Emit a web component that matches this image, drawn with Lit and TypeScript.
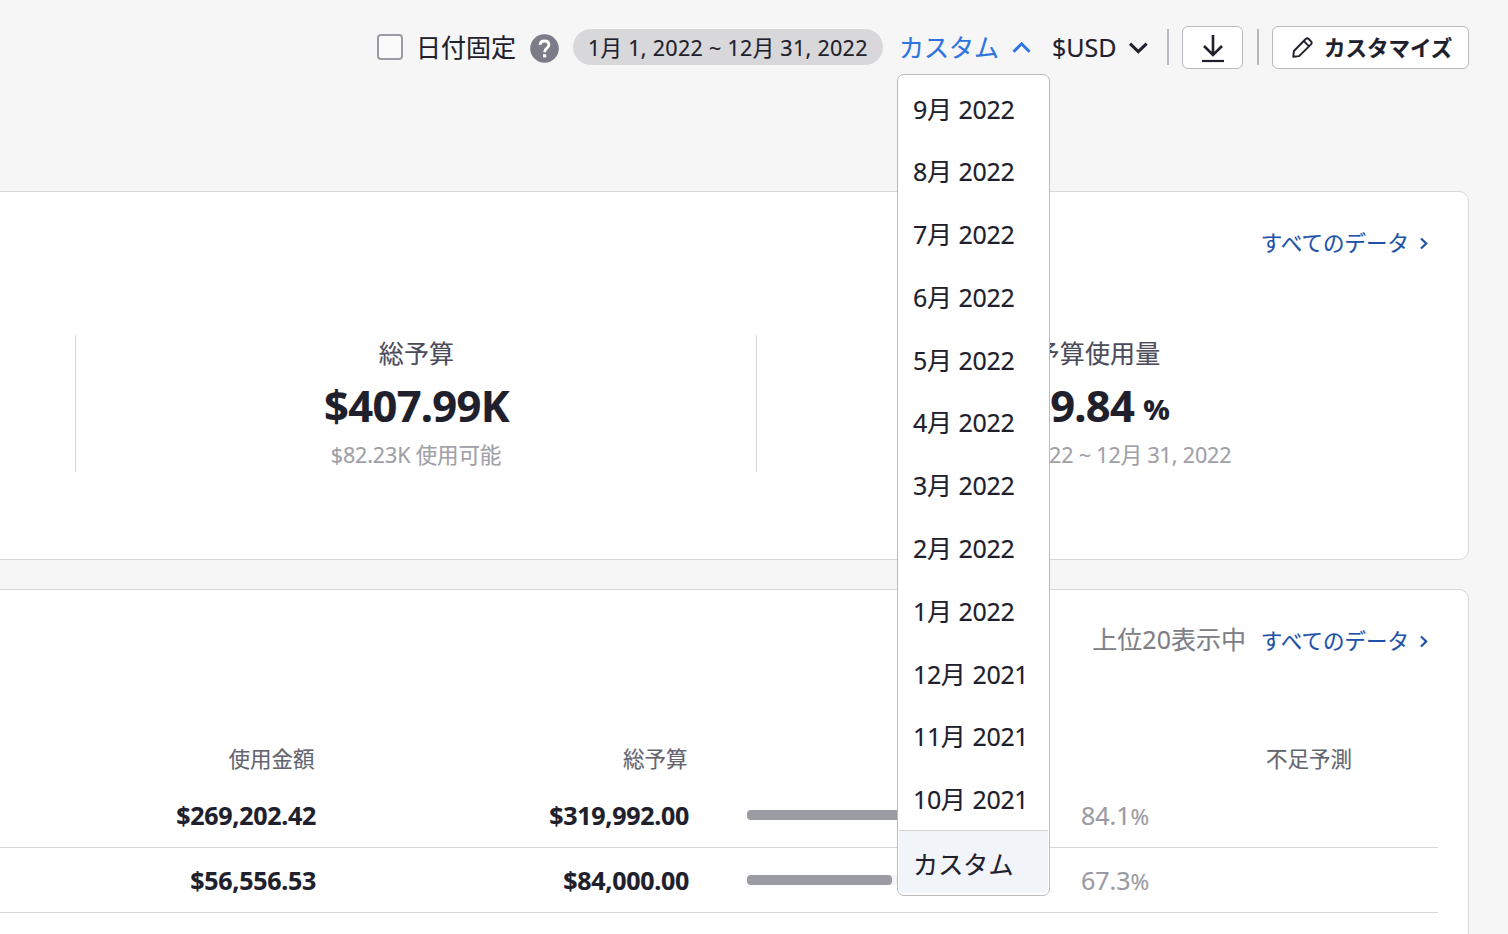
import { LitElement, html, css, svg } from "lit";
import { customElement } from "lit/decorators.js";

const months = [
  "9月 2022", "8月 2022", "7月 2022", "6月 2022", "5月 2022", "4月 2022",
  "3月 2022", "2月 2022", "1月 2022", "12月 2021", "11月 2021", "10月 2021",
];

const rows = [
  { spent: "$269,202.42", total: "$319,992.00", pct: 84.1 },
  { spent: "$56,556.53", total: "$84,000.00", pct: 67.3 },
  { spent: "", total: "", pct: 0 },
];

const chevron = (d: string) => svg`<path d=${d} fill="none" stroke="currentColor" stroke-width="3" />`;

@customElement("app-root")
export class AppRoot extends LitElement {
  static styles = css`
    :host {
      display: block;
      height: 934px;
      overflow: hidden;
      background: #f6f6f6;
      color: #20202c;
      font-family: "Noto Sans", "Noto Sans CJK JP", sans-serif;
      font-size: 25px;
      line-height: 34px;
      white-space: nowrap;
      -webkit-text-stroke: 0.15px currentColor;
    }
    * { box-sizing: border-box; }
    svg { display: block; flex: none; }
    .topbar {
      display: flex;
      align-items: center;
      height: 95px;
      padding-left: 377px;
    }
    .check {
      width: 26px;
      height: 26px;
      border: 2px solid #9b9ba3;
      border-radius: 4px;
      background: #fafafa;
      margin: 0 13px 1px 0;
    }
    .pin { width: 114px; padding-bottom: 2px; }
    .help { margin-top: 2px; }
    .pill {
      width: 310px;
      height: 36px;
      margin: 0 0 1px 14px;
      border-radius: 18px;
      background: #d8d8da;
      font-size: 21.5px;
      letter-spacing: 0.29px;
      line-height: 38px;
      padding-left: 15px;
    }
    .range {
      position: relative;
      display: flex;
      align-items: center;
      width: 153px;
      margin-left: 16px;
      color: #2f73e0;
    }
    .range-label { width: 113px; margin-top: -2px; }
    .currency {
      display: flex;
      align-items: center;
      width: 115px;
    }
    .currency-label { width: 76px; margin-top: -1px; }
    .rule { width: 2px; height: 36px; margin-bottom: 1px; background: #b9b9bd; }
    .btn {
      display: flex;
      align-items: center;
      height: 43px;
      border: 1px solid #b9b9bf;
      border-radius: 6px;
      background: #fff;
    }
    .download { width: 61px; margin: 0 14px 0 13px; padding-left: 18.5px; }
    .customize {
      width: 197px;
      margin-left: 13px;
      padding-left: 19px;
      gap: 11px;
      font-size: 21.5px;
      font-weight: 700;
    }
    .menu {
      position: absolute;
      z-index: 2;
      top: 42px;
      left: -2px;
      width: 153px;
      height: 822px;
      padding: 2px 1px 1px;
      border: 1px solid #b9b9bf;
      border-radius: 7px;
      background: #fff;
      color: #20202c;
    }
    .item {
      height: 62.8px;
      line-height: 64px;
      padding-left: 14px;
      letter-spacing: -0.37px;
      word-spacing: 0.9px;
    }
    .custom {
      height: 63.4px;
      line-height: 67px;
      border-top: 1px solid #d4d4d8;
      border-radius: 0 0 5px 5px;
      background: #f1f4f9;
      letter-spacing: 0.15px;
    }
    .card {
      width: 1489px;
      margin-left: -20px;
      border: 1px solid #d8d8da;
      border-radius: 10px;
      background: #fff;
    }
    .overview { height: 369px; margin-top: 96px; }
    .head {
      display: flex;
      justify-content: flex-end;
      align-items: center;
      height: 102px;
      padding-right: 38px;
    }
    .top20 { color: #7f7f88; width: 168.5px; padding-bottom: 4px; }
    .all {
      display: flex;
      align-items: center;
      gap: 9px;
      font-size: 21.5px;
      color: #1d52a8;
    }
    .stats {
      display: grid;
      grid-template-columns: 94px 681px 681px;
      height: 137px;
      margin-top: 41px;
    }
    .stat {
      height: 137px;
      border-left: 1px solid #d8d8da;
      text-align: center;
    }
    .stat-name { color: #4b4b5a; line-height: 36px; letter-spacing: 0.2px; padding-left: 1px; }
    .stat-value {
      height: 58px;
      font-size: 43.5px;
      font-weight: 700;
      letter-spacing: -0.7px;
      line-height: 58px;
      margin-top: 5px;
      margin-bottom: 5px;
      padding-left: 1px;
    }
    .unit {
      display: inline-block;
      font-size: 28.7px;
      font-weight: 800;
      line-height: 28px;
      margin-left: 9px;
      vertical-align: 2px;
    }
    .stat-note {
      font-size: 21.5px;
      color: #a0a0a7;
      line-height: 32px;
      letter-spacing: -0.15px;
    }
    .budgets { height: 400px; margin-top: 29px; }
    .row {
      display: grid;
      grid-template-columns: 335px 373px 58px 334px 1fr;
      align-items: center;
      height: 65px;
      margin-right: 30px;
      border-bottom: 1px solid #d8d8da;
    }
    .names {
      height: 41px;
      margin-top: 50px;
      border: 0;
      align-items: start;
      font-size: 21.5px;
      color: #64646f;
    }
    .names span { padding-right: 1.5px; }
    .num { text-align: right; font-weight: 700; letter-spacing: -0.28px; }
    .track {
      grid-column: 4;
      width: 215px;
      height: 10px;
      border-radius: 4px;
      background: #f4f4f5;
    }
    .fill { height: 100%; border-radius: 4px; background: #9b9ba3; }
    .pct { color: #9b9ba3; padding-top: 1px; }
    .sign { font-size: 22.5px; }
    .right { text-align: right; }
    .short { grid-column: 5; padding-left: 185px; }
  `;

  private allLink() {
    return html`<span class="all">すべてのデータ
      <svg width="12" height="14" viewBox="0 0 12 14">
        <path d="M3 2.5 8.2 7.5 3 12.5" fill="none" stroke="currentColor" stroke-width="2.2" />
      </svg></span>`;
  }

  render() {
    return html`
      <div class="topbar">
        <div class="check"></div>
        <div class="pin">日付固定</div>
        <svg class="help" width="29" height="29" viewBox="0 0 29 29">
          <circle cx="14.5" cy="14.5" r="14.3" fill="#7c7c89" />
          <path d="M10 10.9C10.2 8.3 11.9 7 14.4 7c2.7 0 4.5 1.4 4.5 3.8 0 1.8-.9 2.7-2.3 3.7-1.5 1-2 1.7-2 3.7"
            fill="none" stroke="#fff" stroke-width="2.8" />
          <rect x="13" y="20.2" width="3.2" height="3.2" fill="#fff" />
        </svg>
        <div class="pill">1月 1, 2022 ~ 12月 31, 2022</div>
        <div class="range">
          <span class="range-label">カスタム</span>
          <svg width="19" height="13" viewBox="0 0 19 13">${chevron("M1.5 10.8 9.5 2.8 17.5 10.8")}</svg>
          <div class="menu">
            ${months.map((m) => html`<div class="item">${m}</div>`)}
            <div class="item custom">カスタム</div>
          </div>
        </div>
        <div class="currency">
          <span class="currency-label">$USD</span>
          <svg width="20" height="13" viewBox="0 0 20 13">${chevron("M2 2.6 10.3 10.6 18.6 2.6")}</svg>
        </div>
        <div class="rule"></div>
        <div class="btn download">
          <svg width="22" height="30" viewBox="0 0 22 30" fill="none" stroke="#20202c">
            <path d="M11 2v20M2 13l9 9 9-9" stroke-width="2.6" />
            <path d="M0 28h22" stroke-width="2.2" />
          </svg>
        </div>
        <div class="rule"></div>
        <div class="btn customize">
          <svg width="21" height="21" viewBox="0 0 21 21" fill="none" stroke="#20202c" stroke-width="1.9" stroke-linejoin="round">
            <path d="M1.3 19.7 1.9 14 13.7 2Q15.2.6 16.7 2L19 4.3Q20.4 5.8 19 7.3L7.1 19.1Z" />
            <path d="M11.9 4.2 16.8 9.1" />
          </svg>
          カスタマイズ
        </div>
      </div>

      <section class="card overview">
        <div class="head">${this.allLink()}</div>
        <div class="stats">
          <div></div>
          <div class="stat">
            <div class="stat-name">総予算</div>
            <div class="stat-value">$407.99K</div>
            <div class="stat-note">$82.23K 使用可能</div>
          </div>
          <div class="stat">
            <div class="stat-name">予算使用量</div>
            <div class="stat-value">79.84<span class="unit">%</span></div>
            <div class="stat-note">1月 1, 2022 ~ 12月 31, 2022</div>
          </div>
        </div>
      </section>

      <section class="card budgets">
        <div class="head"><span class="top20">上位20表示中</span>${this.allLink()}</div>
        <div class="row names">
          <span class="right">使用金額</span>
          <span class="right">総予算</span>
          <span class="short">不足予測</span>
        </div>
        ${rows.map((r) => html`
          <div class="row">
            <span class="num">${r.spent}</span>
            <span class="num">${r.total}</span>
            ${r.pct ? html`
              <div class="track"><div class="fill" style="width:${r.pct}%"></div></div>
              <span class="pct">${r.pct}<span class="sign">%</span></span>` : ""}
          </div>`)}
      </section>
    `;
  }
}
